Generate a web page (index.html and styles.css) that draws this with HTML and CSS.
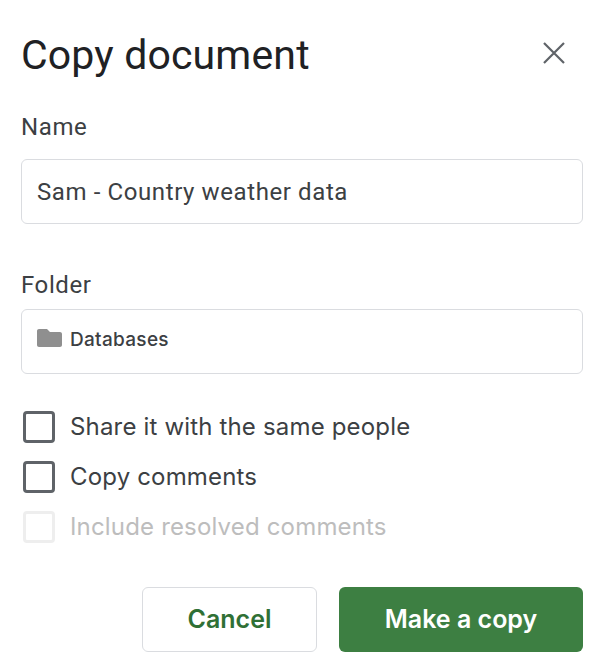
FILE: index.html
```html
<!DOCTYPE html>
<html lang="en">

<head>
    <meta charset="UTF-8">
    <title>Copy document</title>
    <link rel="stylesheet" href="styles.css">
</head>

<body>
    <div class="dialog">
        <div class="header">
            <h1 class="title">Copy document</h1>
            <svg class="close" width="24" height="24" viewBox="0 0 24 24">
                <path d="M2 2L22 22M22 2L2 22" stroke="#5f6368" stroke-width="2.2" fill="none" />
            </svg>
        </div>

        <div class="label name-label">Name</div>
        <div class="field name-field">Sam - Country weather data</div>

        <div class="label folder-label">Folder</div>
        <div class="field folder-field">
            <svg class="folder-icon" width="25" height="18" viewBox="0 0 25 18">
                <path d="M2 0H10L13 3H23C24.100 3 25 3.900 25 5V16C25 17.100 24.100 18 23 18H2C0.900 18 0 17.100 0 16V2C0 0.900 0.900 0 2 0Z" fill="#8f8f8f" />
            </svg>
            <span>Databases</span>
        </div>

        <div class="options">
            <div class="option"><span class="box"></span>Share it with the same people</div>
            <div class="option"><span class="box"></span>Copy comments</div>
            <div class="option disabled"><span class="box"></span>Include resolved comments</div>
        </div>

        <div class="actions">
            <div class="btn btn-cancel">Cancel</div>
            <div class="btn btn-primary">Make a copy</div>
        </div>
    </div>
</body>

</html>
```

FILE: styles.css
```css
body {
    margin: 0;
    background: #fff;
    font-family: Roboto, sans-serif;
    color: #3c4043;
}

.dialog {
    width: 562px;
    padding: 31px 31px 0 21px;
}

.header {
    display: flex;
    justify-content: space-between;
    align-items: center;
    height: 48px;
}

.title {
    margin: 0;
    font-family: Roboto, sans-serif;
    font-size: 41px;
    line-height: 48px;
    font-weight: 400;
    letter-spacing: 0.15px;
    color: #202124;
}

.close {
    margin-right: 17px;
    margin-top: -4px;
}

.label {
    font-size: 24px;
    line-height: 32px;
    letter-spacing: 0.6px;
}

.name-label {
    margin-top: 32px;
}

.folder-label {
    margin-top: 45px;
}

.field {
    box-sizing: border-box;
    display: flex;
    align-items: center;
    width: 562px;
    height: 65px;
    padding: 0 15px;
    border: 1px solid #dadce0;
    border-radius: 6px;
}

.name-field {
    margin-top: 16px;
    font-size: 24px;
    letter-spacing: 0.6px;
}

.folder-field {
    margin-top: 8px;
    padding-bottom: 5px;
    font-family: Inter, sans-serif;
    font-size: 19px;
    font-weight: 500;
    letter-spacing: 0.3px;
}

.folder-icon {
    margin-right: 8px;
    margin-top: -3px;
}

.options {
    margin-top: 28px;
    padding-left: 2px;
}

.option {
    box-sizing: border-box;
    display: flex;
    align-items: center;
    height: 50px;
    padding-bottom: 2px;
    font-family: Inter, sans-serif;
    font-size: 24px;
    letter-spacing: 0.17px;
}

.box {
    box-sizing: border-box;
    width: 32px;
    height: 32px;
    margin-top: 2px;
    margin-right: 15px;
    border: 3px solid #5f6368;
    border-radius: 4px;
}

.disabled {
    color: #bdbdbd;
}

.disabled .box {
    border-color: #eeeeee;
}

.actions {
    display: flex;
    justify-content: flex-end;
    gap: 22px;
    margin-top: 35px;
}

.btn {
    box-sizing: border-box;
    display: flex;
    align-items: center;
    justify-content: center;
    height: 65px;
    padding-bottom: 2px;
    border-radius: 6px;
    font-family: Inter, sans-serif;
    font-size: 25px;
    font-weight: 600;
}

.btn-cancel {
    width: 175px;
    border: 1px solid #dadce0;
    color: #2f7035;
}

.btn-primary {
    width: 244px;
    background: #3d7f42;
    color: #fff;
}
```
